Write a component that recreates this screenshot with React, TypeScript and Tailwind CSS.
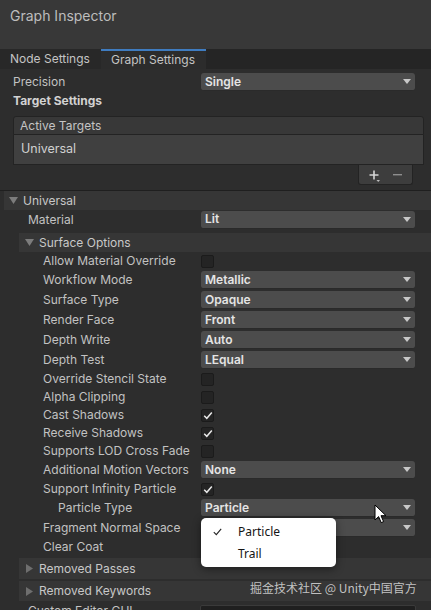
import React from "react";

type RowProps = { label: string; indent?: number; children?: React.ReactNode; h?: string };

function Caret() {
  return (
    <svg width="8" height="5" viewBox="0 0 8 5" className="shrink-0">
      <path d="M0 0 L8 0 L4 5 Z" fill="#c8c8c8" />
    </svg>
  );
}

function Dropdown({ value }: { value?: string }) {
  return (
    <div className="h-[18px] w-[214px] rounded-[3px] bg-[#4c4c4c] border-b border-[#2a2a2a] flex items-center justify-between pl-[4px] pr-[4px]">
      <span className="font-semibold text-[#e4e4e4] leading-none">{value}</span>
      <Caret />
    </div>
  );
}

function Checkbox({ checked }: { checked?: boolean }) {
  return (
    <div className="w-[13px] h-[13px] rounded-[2px] bg-[#242424] border border-[#1b1b1b] flex items-center justify-center">
      {checked && (
        <svg width="10" height="9" viewBox="0 0 10 9">
          <path d="M1.2 4.8 L3.8 7.3 L8.8 1.5" stroke="#e8e8e8" strokeWidth="1.5" fill="none" />
        </svg>
      )}
    </div>
  );
}

function Row({ label, indent = 43, children, h = "h-[20px]" }: RowProps) {
  return (
    <div className={`flex items-center ${h}`}>
      <div className="w-[201px] shrink-0 text-[#c2c2c2] whitespace-nowrap" style={{ paddingLeft: indent }}>
        {label}
      </div>
      {children}
    </div>
  );
}

function Foldout({ label, open, left, h }: { label: string; open?: boolean; left: string; h: string }) {
  return (
    <div className={`flex items-center bg-[#363636] ${left} ${h}`}>
      <svg width="9" height="9" viewBox="0 0 9 9" className="mr-[5px] shrink-0">
        {open ? <path d="M0 1 L9 1 L4.5 8 Z" fill="#7c7c7c" /> : <path d="M1 0 L8 4.5 L1 9 Z" fill="#6e6e6e" />}
      </svg>
      <span className="text-[#c8c8c8]">{label}</span>
    </div>
  );
}

export default function App() {
  return (
    <div
      className="relative w-[431px] h-[610px] overflow-hidden bg-[#2d2d2d] text-[12px] leading-none"
      style={{ fontFamily: "Inter, 'Noto Sans', sans-serif" }}
    >
      {/* title */}
      <div className="h-[49px] bg-[#383838] pl-[10px] pt-[9px] text-[14px] text-[#bdbdbd]">Graph Inspector</div>

      {/* tabs */}
      <div className="flex h-[20px] bg-[#252525]">
        <div className="w-[101px] bg-[#282828] pl-[10px] flex items-center text-[#c4c4c4]">Node Settings</div>
        <div className="w-[105px] bg-[#2c2c2c] border-t-2 border-[#3f7cc0] pl-[10px] flex items-center text-[#c4c4c4]">
          Graph Settings
        </div>
      </div>

      <div className="mt-[3px]">
        <Row label="Precision" indent={13}>
          <Dropdown value="Single" />
        </Row>
      </div>
      <div className="h-[17px] flex items-center pl-[13px] font-bold text-[#d2d2d2]">Target Settings</div>

      {/* active targets list */}
      <div className="ml-[13px] mt-[7px] w-[411px]">
        <div className="h-[19px] bg-[#383838] border border-[#232323] rounded-t-[3px] flex items-center pl-[6px] text-[#c4c4c4]">
          Active Targets
        </div>
        <div className="h-[30px] bg-[#404040] border-x border-b border-[#232323] flex items-center pl-[7px] text-[#d0d0d0] text-[12.5px]">
          Universal
        </div>
        <div className="flex justify-end pr-[11px]">
          <div className="w-[55px] h-[20px] bg-[#3d3d3d] border-x border-b border-[#232323] rounded-b-[3px] flex items-center justify-center gap-[14px] text-[#cfcfcf]">
            <div className="relative w-[10px] h-[10px]">
              <svg width="12" height="12" viewBox="0 0 12 12" className="absolute left-0 top-0">
                <path d="M5 0.5 V9.5 M0.5 5 H9.5" stroke="#d4d4d4" strokeWidth="1.6" />
                <path d="M7.5 10 L11 10 L9.25 12 Z" fill="#bcbcbc" />
              </svg>
            </div>
            <svg width="9" height="2" viewBox="0 0 9 2">
              <rect width="9" height="1.4" fill="#8e8e8e" />
            </svg>
          </div>
        </div>
      </div>

      {/* universal */}
      <div className="mt-[5px] border-t border-[#1f1f1f]">
        <Foldout label="Universal" open left="ml-[4px] pl-[5px]" h="h-[19px]" />
        <Row label="Material" indent={28} h="h-[19px]">
          <Dropdown value="Lit" />
        </Row>
        <div className="mt-[4px]">
          <Foldout label="Surface Options" open left="ml-[19px] pl-[6px]" h="h-[19px]" />
        </div>
        <Row label="Allow Material Override" h="h-[18px]">
          <Checkbox />
        </Row>
        <Row label="Workflow Mode">
          <Dropdown value="Metallic" />
        </Row>
        <Row label="Surface Type">
          <Dropdown value="Opaque" />
        </Row>
        <Row label="Render Face">
          <Dropdown value="Front" />
        </Row>
        <Row label="Depth Write">
          <Dropdown value="Auto" />
        </Row>
        <Row label="Depth Test">
          <Dropdown value="LEqual" />
        </Row>
        <Row label="Override Stencil State" h="h-[18px]">
          <Checkbox />
        </Row>
        <Row label="Alpha Clipping" h="h-[18px]">
          <Checkbox />
        </Row>
        <Row label="Cast Shadows" h="h-[18px]">
          <Checkbox checked />
        </Row>
        <Row label="Receive Shadows" h="h-[18px]">
          <Checkbox checked />
        </Row>
        <Row label="Supports LOD Cross Fade" h="h-[18px]">
          <Checkbox />
        </Row>
        <Row label="Additional Motion Vectors">
          <Dropdown value="None" />
        </Row>
        <Row label="Support Infinity Particle" h="h-[18px]">
          <Checkbox checked />
        </Row>
        <Row label="Particle Type" indent={58}>
          <Dropdown value="Particle" />
        </Row>
        <Row label="Fragment Normal Space">
          <Dropdown />
        </Row>
        <Row label="Clear Coat" h="h-[18px]">
          <Checkbox />
        </Row>
        <div className="mt-[2px]">
          <Foldout label="Removed Passes" left="ml-[19px] pl-[6px]" h="h-[21px]" />
        </div>
        <div className="mt-[2px]">
          <Foldout label="Removed Keywords" left="ml-[19px] pl-[6px]" h="h-[20px]" />
        </div>
        <div className="flex items-center h-[18px] mt-[1px]">
          <div className="w-[200px] pl-[28px] text-[#c4c4c4]">Custom Editor GUI</div>
          <div className="w-[216px] h-[18px] mt-[6px] bg-[#1f1f1f] border border-[#3a3a3a] rounded-[2px]" />
        </div>
      </div>

      {/* popup menu */}
      <div
        className="absolute left-[201px] top-[518px] w-[135px] h-[49px] bg-white rounded-[5px] shadow-[0_2px_8px_rgba(0,0,0,0.45)] pt-[3px]"
        style={{ fontFamily: "'Noto Sans', Inter, sans-serif" }}
      >
        <div className="h-[22px] flex items-center text-[#141414]">
          <svg width="9" height="8" viewBox="0 0 9 8" className="ml-[12px] mr-[16px]">
            <path d="M0.8 4.2 L3.3 6.7 L8.2 0.9" stroke="#222" strokeWidth="1.1" fill="none" />
          </svg>
          Particle
        </div>
        <div className="h-[22px] flex items-center pl-[37px] text-[#141414]">Trail</div>
      </div>

      {/* cursor */}
      <svg className="absolute left-[374px] top-[504px]" width="14" height="20" viewBox="0 0 14 20">
        <path d="M1 1 L1 16 L4.6 12.6 L7.2 18.6 L9.6 17.6 L7 11.7 L12 11.7 Z" fill="#ffffff" stroke="#000" strokeWidth="1" />
      </svg>

      {/* watermark */}
      <div
        className="absolute left-[250px] top-[582px] text-[12px] text-[#d4d4d4]/90 whitespace-nowrap"
        style={{ fontFamily: "'Noto Sans CJK SC', 'Noto Sans', sans-serif" }}
      >
        掘金技术社区 @ Unity中国官方
      </div>
    </div>
  );
}
